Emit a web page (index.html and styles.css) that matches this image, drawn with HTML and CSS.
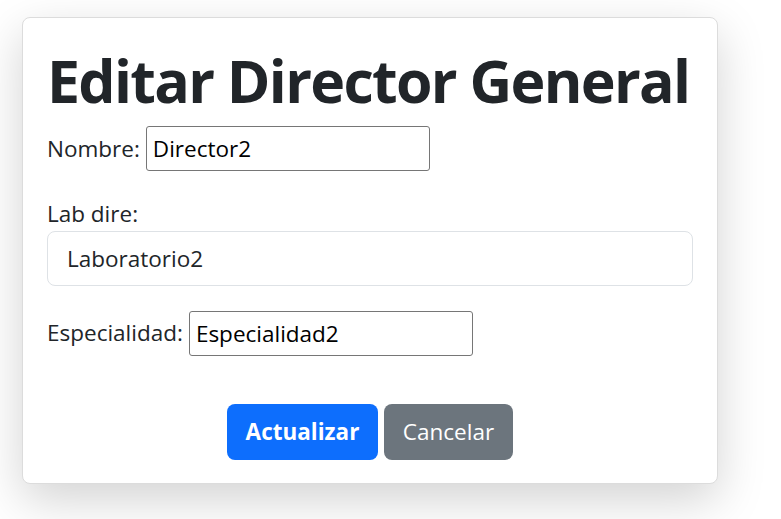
FILE: index.html
```html
<!DOCTYPE html>
<html lang="es">
<head>
<meta charset="utf-8">
<title>Editar Director General</title>
<link rel="stylesheet" href="styles.css">
</head>
<body>
<div class="page">
  <form class="card">
    <h1 class="title">Editar Director General</h1>
    <div class="row-inline">
      <label for="nombre">Nombre:</label>
      <input id="nombre" class="plain-input" type="text" value="Director2">
    </div>
    <div class="row-block">
      <label for="lab">Lab dire:</label>
      <input id="lab" class="form-control" type="text" value="Laboratorio2">
    </div>
    <div class="row-inline">
      <label for="esp">Especialidad:</label>
      <input id="esp" class="plain-input" type="text" value="Especialidad2">
    </div>
    <div class="actions">
      <button type="button" class="btn btn-primary">Actualizar</button>
      <button type="button" class="btn btn-secondary">Cancelar</button>
    </div>
  </form>
</div>
</body>
</html>
```

FILE: styles.css
```css
* { box-sizing: border-box; }
html, body { margin: 0; padding: 0; background: #fff; }
body {
  font-family: "Open Sans", "Noto Sans", sans-serif;
  color: #212529;
  font-size: 22.5px;
  width: 781px;
  height: 519px;
  overflow: hidden;
}
.page {
  padding: 17px 0 0 22px;
}
.card {
  width: 696px;
  height: 467px;
  background: #fff;
  border: 1px solid #dcdcdc;
  border-radius: 8px;
  box-shadow: 0 16px 48px rgba(0, 0, 0, 0.175);
  padding: 24px 24px;
  display: flex;
  flex-direction: column;
}
.title {
  margin: 2px 0 0 0;
  font-size: 59px;
  font-weight: 700;
  line-height: 72px;
  letter-spacing: -1.7px;
  white-space: nowrap;
  color: #212529;
}
.row-inline {
  display: flex;
  align-items: center;
  gap: 6px;
  margin-top: 10px;
}
.row-inline + .row-block { margin-top: 26px; }
.row-block + .row-inline { margin-top: 25px; }
.row-inline label, .row-block label {
  font-size: 22.5px;
  line-height: 1.5;
}
.row-block label { display: block; }
.plain-input {
  width: 284px;
  height: 45px;
  border: 1px solid #767676;
  border-radius: 3px;
  padding: 0 6px;
  font-family: inherit;
  font-size: 22.5px;
  color: #000;
  background: #fff;
}
.form-control {
  display: block;
  width: 100%;
  height: 55px;
  border: 1px solid #dee2e6;
  border-radius: 8px;
  padding: 0 19px;
  font-family: inherit;
  font-size: 22.5px;
  color: #212529;
  background: #fff;
}
.actions {
  display: flex;
  justify-content: center;
  gap: 6px;
  margin-top: 48px;
}
.btn {
  height: 56px;
  border: 0;
  border-radius: 8px;
  font-family: inherit;
  font-size: 22.5px;
  color: #fff;
  padding: 0;
}
.btn-primary { background: #0d6efd; font-weight: 700; width: 151px; }
.btn-secondary { background: #6c757d; font-weight: 400; width: 129px; }
```
